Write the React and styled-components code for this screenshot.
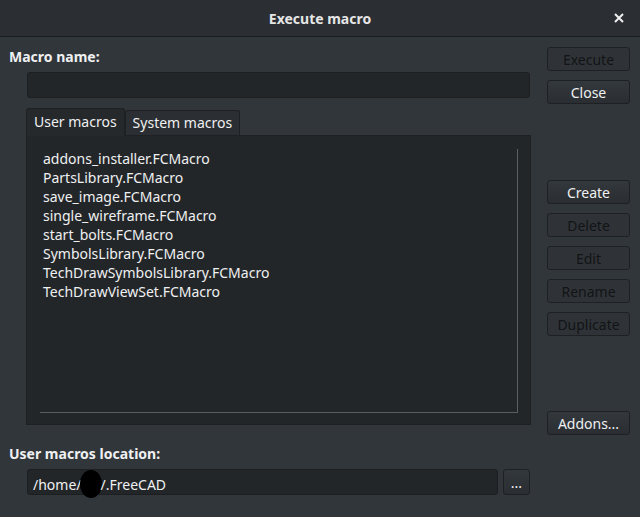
import styled, { createGlobalStyle } from "styled-components";

// Execute macro dialog (FreeCAD, dark theme)

const GlobalStyle = createGlobalStyle`
  html, body {
    margin: 0;
    padding: 0;
    background: #31363b;
  }
  body {
    font-family: "Noto Sans", "Open Sans", sans-serif;
    font-size: 14px;
    color: #eff0f1;
  }
`;

const Dialog = styled.div`
  width: 640px;
  height: 517px;
  display: flex;
  flex-direction: column;
  background: #31363b;
  overflow: hidden;
`;

const TitleBar = styled.div`
  height: 36px;
  flex: none;
  display: flex;
  align-items: center;
  justify-content: center;
  position: relative;
  background: #2b2e32;
  border-bottom: 1px solid #1b1d1f;
  font-weight: bold;
  font-size: 14px;
  color: #e6e6e6;
`;

const CloseX = styled.span`
  position: absolute;
  right: 14px;
  top: 9px;
  width: 14px;
  height: 18px;
  display: flex;
  align-items: center;
  justify-content: center;
`;

const Body = styled.div`
  flex: 1;
  display: flex;
  padding: 10px 10px 0 9px;
  gap: 16px;
`;

const LeftColumn = styled.div`
  flex: 1;
  display: flex;
  flex-direction: column;
`;

const Label = styled.div`
  font-weight: bold;
  height: 20px;
  line-height: 20px;
  margin-top: ${(p) => p.$top || 0}px;
  color: #eff0f1;
`;

const Indented = styled.div`
  margin-left: 18px;
  margin-right: 1px;
  margin-top: ${(p) => p.$top || 0}px;
  display: flex;
  gap: 5px;
`;

const TextField = styled.div`
  flex: 1;
  height: 24px;
  line-height: 24px;
  padding: 0 5px;
  background: #232629;
  border: 1px solid #1c1e20;
  border-radius: 3px;
  color: #eff0f1;
`;

const Redacted = styled.span`
  display: inline-block;
  width: 22px;
  height: 28px;
  margin: 0 -1px -8px -2px;
  background: #000;
  border-radius: 50%;
`;

const TabWidget = styled.div`
  margin-left: 17px;
  margin-top: 9px;
  display: flex;
  flex-direction: column;
`;

const TabBar = styled.div`
  display: flex;
  align-items: flex-end;
  height: 28px;
`;

const Tab = styled.div`
  height: ${(p) => (p.$active ? 28 : 25)}px;
  line-height: ${(p) => (p.$active ? 26 : 24)}px;
  padding: 0 ${(p) => (p.$active ? 7 : 7)}px;
  box-sizing: border-box;
  background: ${(p) => (p.$active ? "#25292c" : "#2b2f33")};
  border: 1px solid #1e2022;
  border-bottom: none;
  border-radius: 3px 3px 0 0;
  color: #eff0f1;
  margin-bottom: ${(p) => (p.$active ? -1 : 0)}px;
  position: relative;
  z-index: ${(p) => (p.$active ? 1 : 0)};
`;

const Pane = styled.div`
  height: 290px;
  box-sizing: border-box;
  background: #232629;
  border: 1px solid #1e2022;
  padding: 13px 12px 11px 13px;
  display: flex;
`;

const ListFrame = styled.div`
  flex: 1;
  border-right: 1px solid #56605f;
  border-bottom: 1px solid #56605f;
  padding: 0 0 0 3px;
  display: flex;
  flex-direction: column;
`;

const ListItem = styled.div`
  height: 19px;
  line-height: 19px;
  color: #eff0f1;
  white-space: nowrap;
`;

const RightColumn = styled.div`
  width: 83px;
  flex: none;
  display: flex;
  flex-direction: column;
`;

const Button = styled.div`
  height: 24px;
  box-sizing: border-box;
  margin-top: ${(p) => p.$top || 0}px;
  display: flex;
  align-items: center;
  justify-content: center;
  border: 1px solid #1e2124;
  border-radius: 3px;
  background: ${(p) =>
    p.$disabled ? "#2f3337" : "linear-gradient(#33383c, #2a2e32)"};
  color: ${(p) => (p.$disabled ? "#121416" : "#eff0f1")};
  font-size: 14px;
`;

const SmallButton = styled(Button)`
  width: 27px;
  height: 26px;
  flex: none;
`;

const macros = [
  "addons_installer.FCMacro",
  "PartsLibrary.FCMacro",
  "save_image.FCMacro",
  "single_wireframe.FCMacro",
  "start_bolts.FCMacro",
  "SymbolsLibrary.FCMacro",
  "TechDrawSymbolsLibrary.FCMacro",
  "TechDrawViewSet.FCMacro",
];

const App = () => {
  return (
    <>
      <GlobalStyle />
      <Dialog>
        <TitleBar>
          Execute macro
          <CloseX>
            <svg width="10" height="10" viewBox="0 0 10 10">
              <path d="M1 1 L9 9 M9 1 L1 9" stroke="#f0f0f0" strokeWidth="2" />
            </svg>
          </CloseX>
        </TitleBar>
        <Body>
          <LeftColumn>
            <Label>Macro name:</Label>
            <Indented $top={5}>
              <TextField />
            </Indented>
            <TabWidget>
              <TabBar>
                <Tab $active>User macros</Tab>
                <Tab>System macros</Tab>
              </TabBar>
              <Pane>
                <ListFrame>
                  {macros.map((m) => (
                    <ListItem key={m}>{m}</ListItem>
                  ))}
                </ListFrame>
              </Pane>
            </TabWidget>
            <Label $top={19}>User macros location:</Label>
            <Indented $top={5}>
              <TextField>
                /home/<Redacted />/.FreeCAD
              </TextField>
              <SmallButton>...</SmallButton>
            </Indented>
          </LeftColumn>
          <RightColumn>
            <Button $disabled>Execute</Button>
            <Button $top={9}>Close</Button>
            <Button $top={76}>Create</Button>
            <Button $top={9} $disabled>Delete</Button>
            <Button $top={9} $disabled>Edit</Button>
            <Button $top={9} $disabled>Rename</Button>
            <Button $top={9} $disabled>Duplicate</Button>
            <Button $top={75}>Addons...</Button>
          </RightColumn>
        </Body>
      </Dialog>
    </>
  );
};

export default App;
